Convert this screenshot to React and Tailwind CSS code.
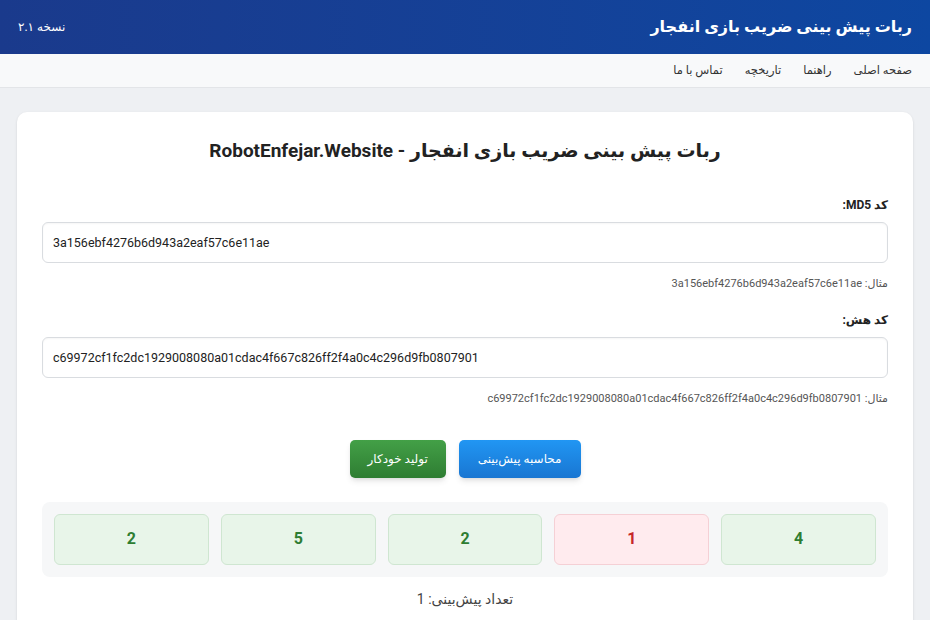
import React from 'react'

const results = [
    { value: 4, hit: true },
    { value: 1, hit: false },
    { value: 2, hit: true },
    { value: 5, hit: true },
    { value: 2, hit: true },
]

function App() {
    const md5 = '3a156ebf4276b6d943a2eaf57c6e11ae'
    const hash = 'c69972cf1fc2dc1929008080a01cdac4f667c826ff2f4a0c4c296d9fb0807901'

    return (
        <div dir="rtl" className="min-h-screen bg-[#eef0f3] font-['Roboto','DejaVu_Sans',sans-serif] text-[#222]">
            {/* Header */}
            <header className="h-[54px] bg-gradient-to-l from-[#0d47a1] to-[#1a3a8c] flex items-center justify-between px-[18px] text-white">
                <h1 className="text-[16px] font-bold">ربات پیش بینی ضریب بازی انفجار</h1>
                <span className="text-[12px]">نسخه ۲.۱</span>
            </header>

            {/* Nav */}
            <nav className="h-[34px] bg-[#f8f9fa] border-b border-[#e3e5e8] flex items-center gap-[22px] px-[18px] text-[11.5px] text-[#333]">
                <a>صفحه اصلی</a>
                <a>راهنما</a>
                <a>تاریخچه</a>
                <a>تماس با ما</a>
            </nav>

            <main className="px-[17px] pt-[24px]">
                <div className="bg-white rounded-t-[10px] shadow-sm px-[25px] pt-[25px] pb-[16px]">
                    <h2 className="text-center text-[19px] font-bold text-[#222] mb-[30px]">
                        ربات پیش بینی ضریب بازی انفجار - RobotEnfejar.Website
                    </h2>

                    {/* MD5 */}
                    <div className="mb-[19px]">
                        <label className="block text-[12px] font-bold mb-[8px]">کد MD5:</label>
                        <input
                            dir="ltr"
                            readOnly
                            value={md5}
                            className="w-full h-[41px] border border-[#d9dce0] rounded-[6px] px-[10px] text-[12.5px] text-[#222] outline-none shadow-[inset_0_1px_2px_rgba(0,0,0,0.04)]"
                        />
                        <p className="text-[11px] text-[#555] mt-[13px]">مثال: {md5}</p>
                    </div>

                    {/* Hash */}
                    <div className="mb-[32px]">
                        <label className="block text-[12px] font-bold mb-[8px]">کد هش:</label>
                        <input
                            dir="ltr"
                            readOnly
                            value={hash}
                            className="w-full h-[41px] border border-[#d9dce0] rounded-[6px] px-[10px] text-[12.5px] text-[#222] outline-none shadow-[inset_0_1px_2px_rgba(0,0,0,0.04)]"
                        />
                        <p className="text-[11px] text-[#555] mt-[13px]">مثال: {hash}</p>
                    </div>

                    {/* Buttons */}
                    <div className="flex justify-center gap-[13px] mb-[24px]">
                        <button className="h-[38px] px-[19px] rounded-[5px] bg-gradient-to-b from-[#2196f3] to-[#1976d2] text-white text-[12px] shadow-md">
                            محاسبه پیش‌بینی
                        </button>
                        <button className="h-[38px] px-[18px] rounded-[5px] bg-gradient-to-b from-[#43a047] to-[#2e7d32] text-white text-[12px] shadow-md">
                            تولید خودکار
                        </button>
                    </div>

                    {/* Results */}
                    <div className="bg-[#f6f7f8] rounded-[8px] p-[12px] grid grid-cols-5 gap-[12px]">
                        {results.map((r, i) => (
                            <div
                                key={i}
                                className={`h-[51px] rounded-[6px] border flex items-center justify-center text-[16px] font-bold ${r.hit ? 'bg-[#e8f5e9] border-[#cfe6d1] text-[#2e7d32]' : 'bg-[#ffebee] border-[#f5d0d5] text-[#c62828]'}`}
                            >
                                {r.value}
                            </div>
                        ))}
                    </div>

                    <p className="text-center text-[14px] text-[#444] mt-[12px]">تعداد پیش‌بینی: 1</p>
                </div>
            </main>
        </div>
    )
}

export default App
